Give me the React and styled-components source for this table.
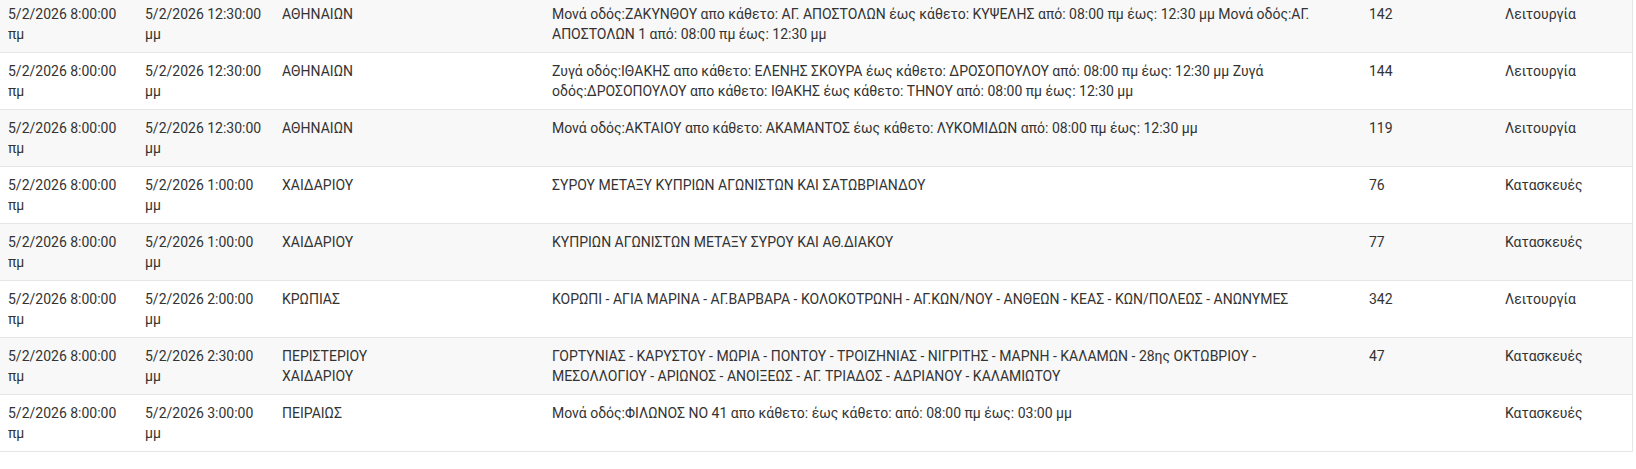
import styled, { createGlobalStyle } from 'styled-components';

const Global = createGlobalStyle`
	html, body {
		margin: 0;
		padding: 0;
		background: #fff;
	}
	body {
		font-family: Roboto, "Noto Sans", "Liberation Sans", sans-serif;
		font-size: 14px;
		line-height: 20px;
		color: #333;
	}
`;

const Scroller = styled.div`
	width: 1633px;
	margin-top: -4px;
`;

const Table = styled.table`
	width: 1632px;
	border-collapse: collapse;
	border-spacing: 0;
	table-layout: fixed;
	border-right: 1px solid #e6e6e6;
`;

const Row = styled.tr`
	background: ${(p) => (p.$striped ? '#f8f8f8' : '#fff')};
`;

const Cell = styled.td`
	padding: 8px;
	vertical-align: top;
	border-bottom: 1px solid #e6e6e6;
	overflow-wrap: break-word;
`;

const widths = [137, 137, 270, 817, 136, 135];

const rows = [
	{
		from: '5/2/2026 8:00:00 πμ',
		to: '5/2/2026 12:30:00 μμ',
		area: ['ΑΘΗΝΑΙΩΝ'],
		text: 'Μονά οδός:ΖΑΚΥΝΘΟΥ απο κάθετο: ΑΓ. ΑΠΟΣΤΟΛΩΝ έως κάθετο: ΚΥΨΕΛΗΣ από: 08:00 πμ έως: 12:30 μμ Μονά οδός:ΑΓ. ΑΠΟΣΤΟΛΩΝ 1 από: 08:00 πμ έως: 12:30 μμ',
		num: '142',
		kind: 'Λειτουργία',
	},
	{
		from: '5/2/2026 8:00:00 πμ',
		to: '5/2/2026 12:30:00 μμ',
		area: ['ΑΘΗΝΑΙΩΝ'],
		text: 'Ζυγά οδός:ΙΘΑΚΗΣ απο κάθετο: ΕΛΕΝΗΣ ΣΚΟΥΡΑ έως κάθετο: ΔΡΟΣΟΠΟΥΛΟΥ από: 08:00 πμ έως: 12:30 μμ Ζυγά οδός:ΔΡΟΣΟΠΟΥΛΟΥ απο κάθετο: ΙΘΑΚΗΣ έως κάθετο: ΤΗΝΟΥ από: 08:00 πμ έως: 12:30 μμ',
		num: '144',
		kind: 'Λειτουργία',
	},
	{
		from: '5/2/2026 8:00:00 πμ',
		to: '5/2/2026 12:30:00 μμ',
		area: ['ΑΘΗΝΑΙΩΝ'],
		text: 'Μονά οδός:ΑΚΤΑΙΟΥ απο κάθετο: ΑΚΑΜΑΝΤΟΣ έως κάθετο: ΛΥΚΟΜΙΔΩΝ από: 08:00 πμ έως: 12:30 μμ',
		num: '119',
		kind: 'Λειτουργία',
	},
	{
		from: '5/2/2026 8:00:00 πμ',
		to: '5/2/2026 1:00:00 μμ',
		area: ['ΧΑΙΔΑΡΙΟΥ'],
		text: 'ΣΥΡΟΥ ΜΕΤΑΞΥ ΚΥΠΡΙΩΝ ΑΓΩΝΙΣΤΩΝ ΚΑΙ ΣΑΤΩΒΡΙΑΝΔΟΥ',
		num: '76',
		kind: 'Κατασκευές',
	},
	{
		from: '5/2/2026 8:00:00 πμ',
		to: '5/2/2026 1:00:00 μμ',
		area: ['ΧΑΙΔΑΡΙΟΥ'],
		text: 'ΚΥΠΡΙΩΝ ΑΓΩΝΙΣΤΩΝ ΜΕΤΑΞΥ ΣΥΡΟΥ ΚΑΙ ΑΘ.ΔΙΑΚΟΥ',
		num: '77',
		kind: 'Κατασκευές',
	},
	{
		from: '5/2/2026 8:00:00 πμ',
		to: '5/2/2026 2:00:00 μμ',
		area: ['ΚΡΩΠΙΑΣ'],
		text: 'ΚΟΡΩΠΙ - ΑΓΙΑ ΜΑΡΙΝΑ - ΑΓ.ΒΑΡΒΑΡΑ - ΚΟΛΟΚΟΤΡΩΝΗ - ΑΓ.ΚΩΝ/ΝΟΥ - ΑΝΘΕΩΝ - ΚΕΑΣ - ΚΩΝ/ΠΟΛΕΩΣ - ΑΝΩΝΥΜΕΣ',
		num: '342',
		kind: 'Λειτουργία',
	},
	{
		from: '5/2/2026 8:00:00 πμ',
		to: '5/2/2026 2:30:00 μμ',
		area: ['ΠΕΡΙΣΤΕΡΙΟΥ', 'ΧΑΙΔΑΡΙΟΥ'],
		text: 'ΓΟΡΤΥΝΙΑΣ - ΚΑΡΥΣΤΟΥ - ΜΩΡΙΑ - ΠΟΝΤΟΥ - ΤΡΟΙΖΗΝΙΑΣ - ΝΙΓΡΙΤΗΣ - ΜΑΡΝΗ - ΚΑΛΑΜΩΝ - 28ης ΟΚΤΩΒΡΙΟΥ - ΜΕΣΟΛΛΟΓΙΟΥ - ΑΡΙΩΝΟΣ - ΑΝΟΙΞΕΩΣ - ΑΓ. ΤΡΙΑΔΟΣ - ΑΔΡΙΑΝΟΥ - ΚΑΛΑΜΙΩΤΟΥ',
		num: '47',
		kind: 'Κατασκευές',
	},
	{
		from: '5/2/2026 8:00:00 πμ',
		to: '5/2/2026 3:00:00 μμ',
		area: ['ΠΕΙΡΑΙΩΣ'],
		text: 'Μονά οδός:ΦΙΛΩΝΟΣ ΝΟ 41 απο κάθετο: έως κάθετο: από: 08:00 πμ έως: 03:00 μμ',
		num: '',
		kind: 'Κατασκευές',
	},
];

export default function App() {
	return (
		<>
			<Global />
			<Scroller>
				<Table>
					<colgroup>
						{widths.map((w, i) => (
							<col key={i} style={{ width: w }} />
						))}
					</colgroup>
					<tbody>
						{rows.map((r, i) => (
							<Row key={i} $striped={i % 2 === 0}>
								<Cell>{r.from}</Cell>
								<Cell>{r.to}</Cell>
								<Cell>
									{r.area.map((a, j) => (
										<div key={j}>{a}</div>
									))}
								</Cell>
								<Cell>{r.text}</Cell>
								<Cell>{r.num}</Cell>
								<Cell>{r.kind}</Cell>
							</Row>
						))}
					</tbody>
				</Table>
			</Scroller>
		</>
	);
}
